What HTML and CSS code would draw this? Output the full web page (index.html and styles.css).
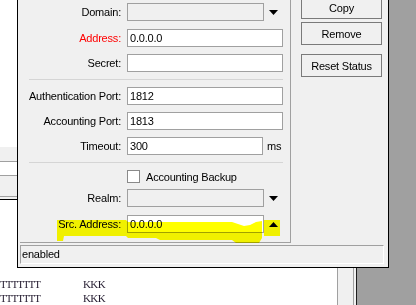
FILE: index.html
```html
<!DOCTYPE html>
<html lang="en">
<head>
  <meta charset="UTF-8">
  <title>RADIUS Server</title>
  <link rel="stylesheet" href="styles.css">
</head>
<body>
  <div class="desk">

    <div class="list-win">
      <div class="list-main">
        <div class="list-gap"></div>
        <div class="strip strip-a"></div>
        <div class="strip strip-b"></div>
        <div class="strip strip-c"></div>
        <div class="strip strip-d"></div>
        <div class="list-rows">
          <div class="row"><span class="c1">TTTTTTT</span><span class="c2">KKK</span></div>
          <div class="row"><span class="c1">TTTTTTT</span><span class="c2">KKK</span></div>
        </div>
      </div>
      <div class="list-scroll"></div>
    </div>

    <div class="dialog">
      <div class="dlg-body">
        <div class="form-panel">
          <div class="field loose">
            <label>Domain:</label>
            <div class="combo">
              <div class="input disabled"></div>
              <span class="arrow"><svg width="9" height="5"><path d="M0 0H9L4.5 5Z"/></svg></span>
            </div>
          </div>
          <div class="field">
            <label class="req">Address:</label>
            <div class="input">0.0.0.0</div>
          </div>
          <div class="field">
            <label>Secret:</label>
            <div class="input"></div>
          </div>

          <div class="sep"></div>

          <div class="field">
            <label>Authentication Port:</label>
            <div class="input">1812</div>
          </div>
          <div class="field">
            <label>Accounting Port:</label>
            <div class="input">1813</div>
          </div>
          <div class="field">
            <label>Timeout:</label>
            <div class="with-unit">
              <div class="input short">300</div>
              <span class="unit">ms</span>
            </div>
          </div>

          <div class="sep"></div>

          <div class="check-row">
            <span class="checkbox"></span>
            <span class="check-text">Accounting Backup</span>
          </div>
          <div class="field loose">
            <label>Realm:</label>
            <div class="combo">
              <div class="input disabled"></div>
              <span class="arrow"><svg width="9" height="5"><path d="M0 0H9L4.5 5Z"/></svg></span>
            </div>
          </div>
          <div class="field">
            <label>Src. Address:</label>
            <div class="combo">
              <div class="input">0.0.0.0</div>
              <span class="arrow"><svg width="9" height="5"><path d="M0 5H9L4.5 0Z"/></svg></span>
            </div>
          </div>
        </div>

        <div class="buttons">
          <button>Copy</button>
          <button>Remove</button>
          <button class="spaced">Reset Status</button>
        </div>
      </div>
      <div class="status">enabled</div>
    </div>

    <!-- highlighter marks drawn over the screenshot -->
    <svg class="marker" width="416" height="305" viewBox="0 0 416 305">
      <path d="M57 220H126L128 222H232L238 224L244 226L250 225L256 222L262 221V238L259 243H236L232 240H160L156 238H128L126 236H64L63 241H57Z"/>
      <rect x="264" y="220" width="16" height="16"/>
    </svg>

  </div>
</body>
</html>
```

FILE: styles.css
```css
* {
  box-sizing: border-box;
}
body {
  margin: 0;
  width: 416px;
  height: 305px;
  overflow: hidden;
  background: #a0a0a0;
  font-family: "Liberation Sans", Arial, sans-serif;
  font-size: 11px;
  color: #000;
}
.desk {
  position: relative;
  width: 416px;
  height: 305px;
}

/* list window behind the dialog */
.list-win {
  width: 357px;
  height: 305px;
  display: flex;
  background: #f0f0f0;
  border-right: 1px solid #1e1e1e;
}
.list-main {
  flex: 1;
  display: flex;
  flex-direction: column;
  background: #fff;
}
.list-gap {
  height: 147px;
}
.strip-a {
  height: 15px;
  background: #f0f0f0;
  border-bottom: 1px solid #a0a0a0;
}
.strip-b {
  height: 14px;
  background: #fff;
  border-bottom: 1px solid #a0a0a0;
}
.strip-c {
  height: 21px;
  background: #f0f0f0;
  border-bottom: 1px solid #a0a0a0;
}
.strip-d {
  height: 3px;
  background: #f0f0f0;
  border-bottom: 1px solid #000;
}
.list-rows {
  flex: 1;
  display: flex;
  flex-direction: column;
  justify-content: flex-end;
  font-family: "Liberation Serif", "Times New Roman", serif;
  font-size: 11px;
  color: #241c30;
}
.row {
  height: 14px;
  line-height: 14px;
  display: flex;
  white-space: nowrap;
}
.c1 {
  width: 83px;
  letter-spacing: -1px;
}
.c2 {
  letter-spacing: -0.6px;
}
.list-scroll {
  width: 17px;
  margin-right: 2px;
  background: #f0f0f0;
  border-left: 1px solid #a0a0a0;
  border-right: 1px solid #a0a0a0;
}

/* dialog */
.dialog {
  position: absolute;
  left: 17px;
  top: -6px;
  width: 372px;
  background: #f0f0f0;
  border: 1px solid #000;
  padding: 0 4px 3px 2px;
  letter-spacing: -0.2px;
}
.dlg-body {
  display: flex;
}
.form-panel {
  width: 271px;
  border-right: 1px solid #a0a0a0;
  border-bottom: 1px solid #a0a0a0;
  padding: 8px 7px 2px 0;
}
.field {
  display: grid;
  grid-template-columns: 104px 156px;
  column-gap: 3px;
  align-items: center;
  height: 18px;
  margin-bottom: 7px;
}
.field.loose {
  margin-bottom: 8px;
}
.field label {
  text-align: right;
  padding-right: 3px;
  white-space: nowrap;
}
.field label.req {
  color: #f00;
}
.input {
  height: 18px;
  border: 1px solid #a0a0a0;
  background: #fff;
  padding: 0 2px;
  line-height: 16px;
  white-space: nowrap;
}
.input.disabled {
  background: #f0f0f0;
}
.combo {
  display: flex;
}
.combo .input {
  width: 137px;
}
.arrow {
  width: 19px;
  display: flex;
  align-items: center;
  justify-content: center;
}
.arrow svg {
  display: block;
}
.with-unit {
  display: flex;
  align-items: center;
}
.input.short {
  width: 136px;
}
.unit {
  margin-left: 4px;
}
.sep {
  height: 1px;
  background: #d5d5d5;
  margin: 2px 0 7px 9px;
}
.check-row {
  display: flex;
  align-items: center;
  height: 13px;
  margin: 0 0 6px 107px;
}
.checkbox {
  width: 13px;
  height: 13px;
  border: 1px solid #8a8a8a;
  background: #fff;
}
.check-text {
  margin-left: 6px;
}

.buttons {
  width: 81px;
  margin: 0 2px 0 10px;
  padding-top: 1px;
  display: flex;
  flex-direction: column;
}
button {
  height: 23px;
  margin: 0 0 3px;
  padding: 0;
  border: 1px solid #7a7a7a;
  background: #f0f0f0;
  font: inherit;
  letter-spacing: inherit;
  color: #000;
}
button.spaced {
  margin-top: 6px;
}

.status {
  margin-top: 2px;
  height: 19px;
  border: 1px solid;
  border-color: #a0a0a0 #fff #fff #a0a0a0;
  padding-left: 1px;
  line-height: 17px;
}

.marker {
  position: absolute;
  left: 0;
  top: 0;
  pointer-events: none;
  mix-blend-mode: multiply;
  fill: #ffff00;
}
```
